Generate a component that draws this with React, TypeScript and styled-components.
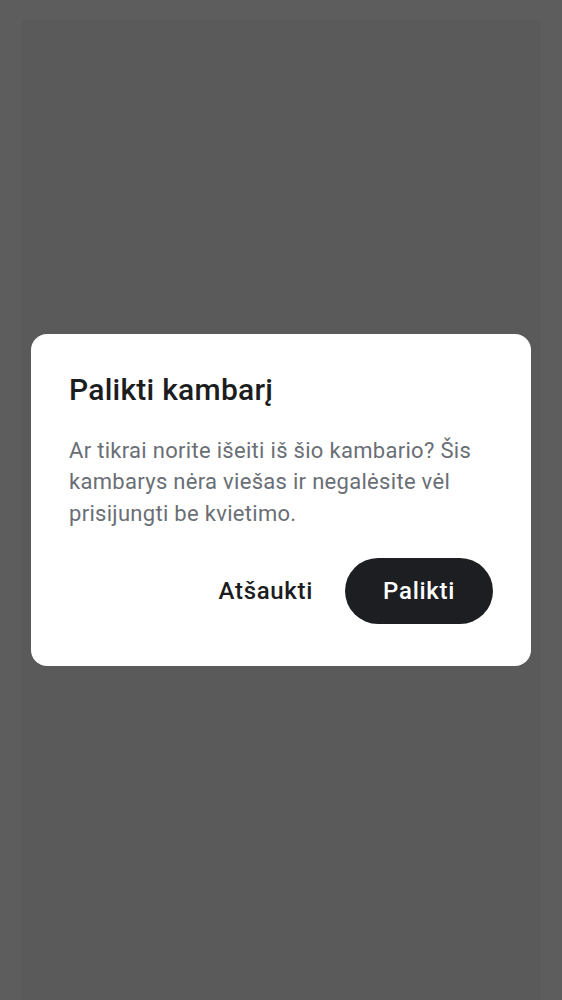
import styled, { createGlobalStyle } from 'styled-components'

const GlobalStyle = createGlobalStyle`
  html, body {
    margin: 0;
    padding: 0;
    height: 100%;
  }
  body {
    font-family: Roboto, "Noto Sans", sans-serif;
    background: #5a5a5a;
  }
`

// dimmed page behind the dialog, with the faint edge of the underlying screen
const Overlay = styled.div`
  box-sizing: border-box;
  width: 100%;
  height: 1000px;
  background:
    linear-gradient(#5a5a5a, #5a5a5a) 22px 20px / calc(100% - 44px) 100% no-repeat,
    #5d5d5d;
  display: flex;
  align-items: center;
  justify-content: center;
`

const Dialog = styled.div`
  box-sizing: border-box;
  width: 500px;
  background: #ffffff;
  border-radius: 16px;
  padding: 38px 38px 42px 38px;
  display: flex;
  flex-direction: column;
`

const Title = styled.h2`
  margin: 0;
  font-family: Roboto, sans-serif;
  font-size: 30px;
  font-weight: 500;
  line-height: 36px;
  letter-spacing: 0.25px;
  color: #1c1d21;
`

const Message = styled.p`
  margin: 27px 0 0;
  font-family: Roboto, sans-serif;
  font-size: 22px;
  line-height: 31.5px;
  letter-spacing: 0.3px;
  color: #6a6e75;
`

const Actions = styled.div`
  margin-top: 29px;
  display: flex;
  justify-content: flex-end;
  align-items: center;
  gap: 12px;
`

const Button = styled.button<{ $primary?: boolean }>`
  height: 66px;
  padding: 0 ${(p) => (p.$primary ? '38px' : '20px')};
  border: none;
  border-radius: 33px;
  font-family: Roboto, sans-serif;
  font-size: 24px;
  font-weight: 500;
  letter-spacing: 0.7px;
  background: ${(p) => (p.$primary ? '#1d1e22' : 'transparent')};
  color: ${(p) => (p.$primary ? '#ffffff' : '#1c1d21')};
  cursor: pointer;
`

export default function App() {
  return (
    <>
      <GlobalStyle />
      <Overlay>
        <Dialog>
          <Title>Palikti kambarį</Title>
          <Message>
            Ar tikrai norite išeiti iš šio kambario? Šis kambarys nėra viešas ir
            negalėsite vėl prisijungti be kvietimo.
          </Message>
          <Actions>
            <Button>Atšaukti</Button>
            <Button $primary>Palikti</Button>
          </Actions>
        </Dialog>
      </Overlay>
    </>
  )
}
